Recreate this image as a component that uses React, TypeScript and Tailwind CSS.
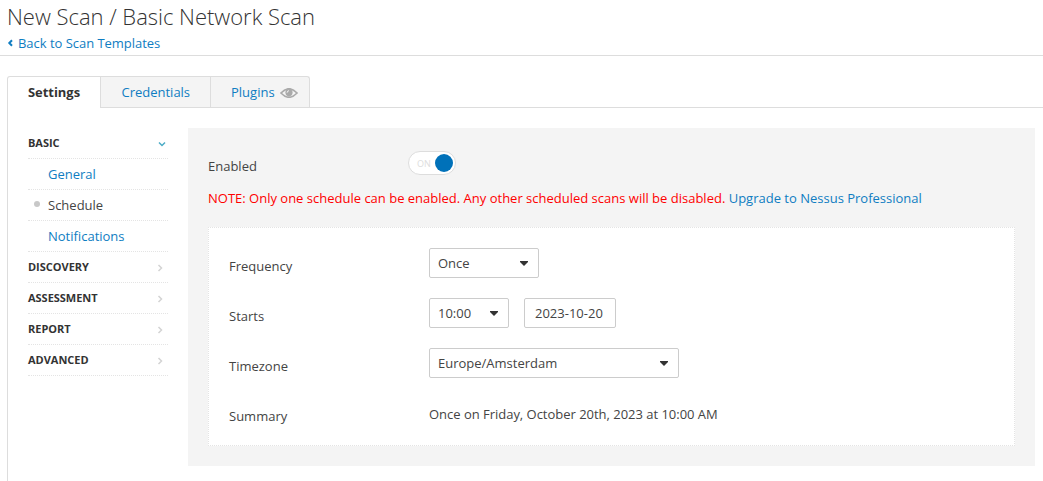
import React from 'react';

const Chevron = ({ d, cls }: { d: string; cls: string }) => (
  <svg className={cls} width="8" height="8" viewBox="0 0 8 8" fill="none" stroke="currentColor" strokeWidth="1.5"><path d={d} /></svg>
);

function Section({ label, open }: { label: string; open?: boolean }) {
  return (
    <div className="flex h-[31px] items-center justify-between border-b border-dotted border-[#e4e4e4] text-[11px] font-bold">
      <span className="tracking-[-0.02px]">{label}</span>
      {open ? <Chevron cls="mr-[2px] mt-px text-[#4bacc6]" d="M1 2.5L4 5.5L7 2.5" /> : <Chevron cls="mr-[4px] mt-[2px] text-[#d4d4d4]" d="M2.5 1L5.5 4L2.5 7" />}
    </div>
  );
}

function Select({ value, width }: { value: string; width: string }) {
  return (
    <button className={`flex h-[30px] items-center justify-between rounded-[2px] border border-[#ccc] bg-white pl-2 pr-[10px] ${width}`}>
      <span>{value}</span>
      <svg className="mt-px" width="8" height="5" viewBox="0 0 8 5"><path d="M0 0H8V1L4 5L0 1Z" fill="#333" /></svg>
    </button>
  );
}

function Row({ label, children }: { label: string; children: React.ReactNode }) {
  return (
    <div className="flex h-[50px] items-start">
      <div className="w-[200px] pt-[9px]">{label}</div>
      <div className="flex gap-[15px]">{children}</div>
    </div>
  );
}

export default function App() {
  return (
    <div className="h-[481px] w-[1043px] overflow-hidden bg-white font-['Open_Sans',sans-serif] text-[13px] leading-[18px] text-[#444]">
      <header className="h-[56px] border-b border-[#ddd] pl-[7px]">
        <h1 className="pt-[2px] text-[22px] font-light leading-[28px] tracking-[-0.02px] text-[#333]">New Scan / Basic Network Scan</h1>
        <a className="mt-[4px] flex items-center tracking-[-0.03px] text-[#0f7dc2]">
          <svg className="mr-[5px]" width="6" height="8" viewBox="0 0 6 8" fill="none" stroke="currentColor" strokeWidth="2"><path d="M5 1.2L2.3 4L5 6.8" /></svg>
          Back to Scan Templates
        </a>
      </header>
      <nav className="ml-[7px] mt-5 flex h-8 border-b border-[#ddd]">
        <div className="h-8 w-[94px] rounded-tl-[3px] border-x border-t border-[#ddd] bg-white pl-5 pt-[6px] font-bold text-[#333]"><span className="tracking-[-0.05px]">Settings</span></div>
        <div className="h-[31px] w-[110px] border-r border-t border-[#ddd] bg-[#f4f4f4] pl-[20.6px] pt-[6px] tracking-[-0.02px] text-[#0f7dc2]">Credentials</div>
        <div className="flex h-[31px] w-[99px] rounded-tr-[3px] border-r border-t border-[#ddd] bg-[#f4f4f4] pl-5 pt-[6px] text-[#0f7dc2]">
          Plugins
          <svg className="ml-[5px] mt-[5px]" width="18" height="10" viewBox="0 0 18 10"><path d="M1 5Q9-3.4 17 5Q9 13.4 1 5Z" fill="none" stroke="#aaa" strokeWidth="1.8" /><circle cx="9" cy="4.6" r="3.6" fill="#aaa" /><path d="M7.1 4.7Q7.1 2.8 9 2.7" fill="none" stroke="#f4f4f4" strokeWidth="1" /></svg>
        </div>
      </nav>
      <div className="ml-[7px] flex h-[373px] border-l border-[#ddd]">
        <aside className="ml-5 w-[140px] pt-5 text-[#333]">
          <Section label="BASIC" open />
          <div className="h-[31px] border-b border-dotted border-[#e4e4e4] pl-5 pt-[6px] text-[#0f7dc2]">General</div>
          <div className="flex h-[31px] items-center border-b border-dotted border-[#e4e4e4] text-[#444]"><i className="mb-[3px] ml-[6px] mr-2 size-[6px] rounded-full bg-[#c8c8c8]" />Schedule</div>
          <div className="h-[31px] border-b border-dotted border-[#e4e4e4] pl-5 pt-[6px] text-[#0f7dc2]">Notifications</div>
          <Section label="DISCOVERY" />
          <Section label="ASSESSMENT" />
          <Section label="REPORT" />
          <Section label="ADVANCED" />
        </aside>
        <main className="ml-5 mt-5 h-[338px] w-[847px] bg-[#f4f4f4] px-5">
          <div className="flex h-[61px] pt-[23px]">
            <span className="w-[200px] pt-[6px]">Enabled</span>
            <span className="flex h-6 w-12 items-center justify-between rounded-full border border-[#ddd] bg-white pl-2 pr-[2px] text-[9px] text-[#ddd]"><span className="pt-px">ON</span><i className="size-[18px] rounded-full bg-[#0071b9]" /></span>
          </div>
          <p className="whitespace-nowrap text-[#f00]">NOTE: Only one schedule can be enabled. Any other scheduled scans will be disabled. <a className="text-[#0f7dc2]">Upgrade to Nessus Professional</a></p>
          <section className="mt-[20px] h-[219px] border border-dotted border-[#e4e4e4] bg-white pl-[20px] pt-5">
            <Row label="Frequency"><Select value="Once" width="w-[110px]" /></Row>
            <Row label="Starts"><Select value="10:00" width="w-[80px]" /><div className="flex h-[30px] w-[92px] items-center rounded-[2px] border border-[#ccc] pl-[10px]">2023-10-20</div></Row>
            <Row label="Timezone"><Select value="Europe/Amsterdam" width="w-[250px]" /></Row>
            <Row label="Summary"><span className="pt-[7px] tracking-[-0.02px]">Once on Friday, October 20th, 2023 at 10:00 AM</span></Row>
          </section>
        </main>
      </div>
    </div>
  );
}
